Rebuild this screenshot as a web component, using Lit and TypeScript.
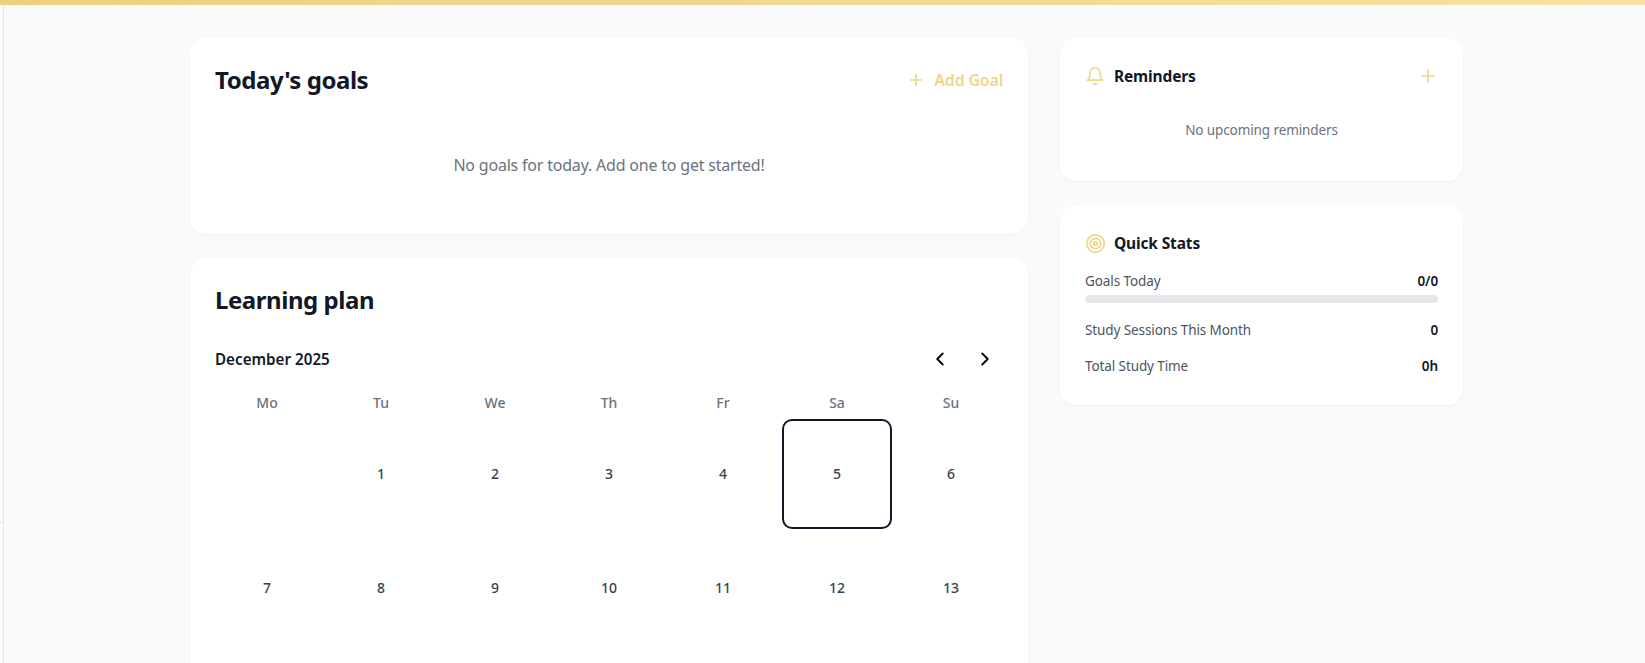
import { LitElement, html, css, svg } from 'lit';
import { customElement } from 'lit/decorators.js';

const WEEKDAYS = ['Mo', 'Tu', 'We', 'Th', 'Fr', 'Sa', 'Su'];
// only the rows that fit above the fold
const DAYS: (number | null)[] = [null, 1, 2, 3, 4, 5, 6, 7, 8, 9, 10, 11, 12, 13];

const plus = svg`<path d="M5 12h14"/><path d="M12 5v14"/>`;

@customElement('app-root')
export class AppRoot extends LitElement {
  static styles = css`
    :host {
      display: block;
      height: 663px;
      overflow: hidden;
      background: #f9fafb;
      font-family: 'Noto Sans', 'Open Sans', sans-serif;
      color: #111827;
    }

    .topbar {
      height: 5px;
      background: linear-gradient(90deg, #ebd080, #f5e2a0);
    }

    .shell {
      display: flex;
      height: 658px;
    }

    .rail {
      width: 3px;
      background: #ffffff;
      border-right: 1px solid #e5e7eb;
      flex: none;
      position: relative;
    }

    .rail::after {
      content: '';
      position: absolute;
      left: 0;
      right: 0;
      top: 517px;
      height: 1px;
      background: #e5e7eb;
    }

    .main {
      flex: 1;
      padding: 33px 0 0 186px;
    }

    .grid {
      display: grid;
      grid-template-columns: 838px 403px;
      gap: 32px;
      width: 1273px;
      align-items: start;
    }

    .col {
      display: flex;
      flex-direction: column;
      gap: 24px;
    }

    .card {
      background: #ffffff;
      border-radius: 16px;
      box-shadow: 0 1px 3px rgba(0, 0, 0, 0.04);
      padding: 26px 25px 0;
      box-sizing: border-box;
    }

    .goals {
      height: 196px;
    }

    .card-head {
      display: flex;
      justify-content: space-between;
      align-items: center;
      height: 32px;
    }

    h2 {
      margin: 0;
      font-size: 24px;
      line-height: 32px;
      font-weight: 700;
      letter-spacing: -0.45px;
    }

    .add {
      display: flex;
      align-items: center;
      gap: 8px;
      font-size: 16px;
      font-weight: 600;
      color: #edd68c;
      letter-spacing: -0.2px;
    }

    .empty {
      text-align: center;
      color: #6b7280;
      font-size: 16px;
      line-height: 24px;
      margin: 57px 0 0;
      letter-spacing: -0.2px;
    }

    svg.icon {
      fill: none;
      stroke: currentColor;
      stroke-width: 2;
      stroke-linecap: round;
      stroke-linejoin: round;
      flex: none;
      display: block;
    }

    .plan {
      height: 520px;
    }

    .plan h2 {
      margin-bottom: 31px;
    }

    .month-row {
      display: flex;
      justify-content: space-between;
      align-items: center;
      height: 24px;
      margin-bottom: 22px;
    }

    .month {
      font-size: 15.2px;
      font-weight: 600;
      color: #111827;
    }

    .nav {
      display: flex;
      gap: 23px;
      padding-right: 7px;
      margin-top: -1px;
      color: #000000;
    }

    .days {
      display: grid;
      grid-template-columns: repeat(7, 1fr);
      gap: 4px;
      margin: 0 -3px;
    }

    .wd {
      text-align: center;
      font-size: 14px;
      font-weight: 500;
      color: #6b7280;
      line-height: 20px;
      height: 20px;
      margin-bottom: 2px;
    }

    .day {
      height: 110px;
      box-sizing: border-box;
      padding-bottom: 2px;
      border-radius: 8px;
      display: flex;
      align-items: center;
      justify-content: center;
      font-size: 14px;
      font-weight: 500;
      color: #374151;
    }

    .day.today {
      border: 2px solid #111827;
      border-radius: 10px;
    }

    .side-title {
      display: flex;
      align-items: center;
      gap: 9px;
      font-size: 15.5px;
      font-weight: 700;
      color: #111827;
      letter-spacing: -0.15px;
    }

    .gold {
      color: #edd68c;
    }

    .reminders {
      height: 143px;
    }

    .reminders .card-head {
      height: 24px;
    }

    .reminders .empty {
      font-size: 13.5px;
      line-height: 20px;
      margin-top: 32px;
      letter-spacing: -0.1px;
    }

    .stats {
      height: 200px;
    }

    .stats .side-title {
      gap: 8px;
      height: 24px;
      margin-bottom: 16px;
    }

    .row {
      display: flex;
      justify-content: space-between;
      align-items: center;
      font-size: 13.5px;
      line-height: 20px;
      color: #4b5563;
      letter-spacing: -0.1px;
    }

    .row b {
      font-weight: 600;
      color: #111827;
    }

    .bar {
      height: 8px;
      background: #e5e7eb;
      border-radius: 4px;
      margin: 4px 0 17px;
    }

    .row + .row {
      margin-top: 16px;
    }
  `;

  render() {
    return html`
      <div class="topbar"></div>
      <div class="shell">
        <div class="rail"></div>
        <main class="main">
          <div class="grid">
            <div class="col">
              <section class="card goals">
                <div class="card-head">
                  <h2>Today's goals</h2>
                  <div class="add">
                    <svg class="icon" width="20" height="20" viewBox="0 0 24 24">${plus}</svg>
                    Add Goal
                  </div>
                </div>
                <p class="empty">No goals for today. Add one to get started!</p>
              </section>
              <section class="card plan">
                <h2>Learning plan</h2>
                <div class="month-row">
                  <span class="month">December 2025</span>
                  <div class="nav">
                    <svg class="icon" width="22" height="22" viewBox="0 0 24 24"><path d="m15 18-6-6 6-6"/></svg>
                    <svg class="icon" width="22" height="22" viewBox="0 0 24 24"><path d="m9 18 6-6-6-6"/></svg>
                  </div>
                </div>
                <div class="days">
                  ${WEEKDAYS.map((d) => html`<div class="wd">${d}</div>`)}
                  ${DAYS.map((d) => html`<div class="day ${d === 5 ? 'today' : ''}">${d ?? ''}</div>`)}
                </div>
              </section>
            </div>
            <div class="col">
              <section class="card reminders">
                <div class="card-head">
                  <div class="side-title">
                    <svg class="icon gold" width="20" height="20" viewBox="0 0 24 24">
                      <path d="M6 8a6 6 0 0 1 12 0c0 7 3 9 3 9H3s3-2 3-9"/>
                      <path d="M10.3 21a1.94 1.94 0 0 0 3.4 0"/>
                    </svg>
                    Reminders
                  </div>
                  <svg class="icon gold" width="20" height="20" viewBox="0 0 24 24">${plus}</svg>
                </div>
                <p class="empty">No upcoming reminders</p>
              </section>
              <section class="card stats">
                <div class="side-title">
                  <svg class="icon gold" width="21" height="21" viewBox="0 0 24 24">
                    <circle cx="12" cy="12" r="10"/>
                    <circle cx="12" cy="12" r="6"/>
                    <circle cx="12" cy="12" r="2"/>
                  </svg>
                  Quick Stats
                </div>
                <div class="row"><span>Goals Today</span><b>0/0</b></div>
                <div class="bar"></div>
                <div class="row"><span>Study Sessions This Month</span><b>0</b></div>
                <div class="row"><span>Total Study Time</span><b>0h</b></div>
              </section>
            </div>
          </div>
        </main>
      </div>
    `;
  }
}

declare global {
  interface HTMLElementTagNameMap {
    'app-root': AppRoot;
  }
}
